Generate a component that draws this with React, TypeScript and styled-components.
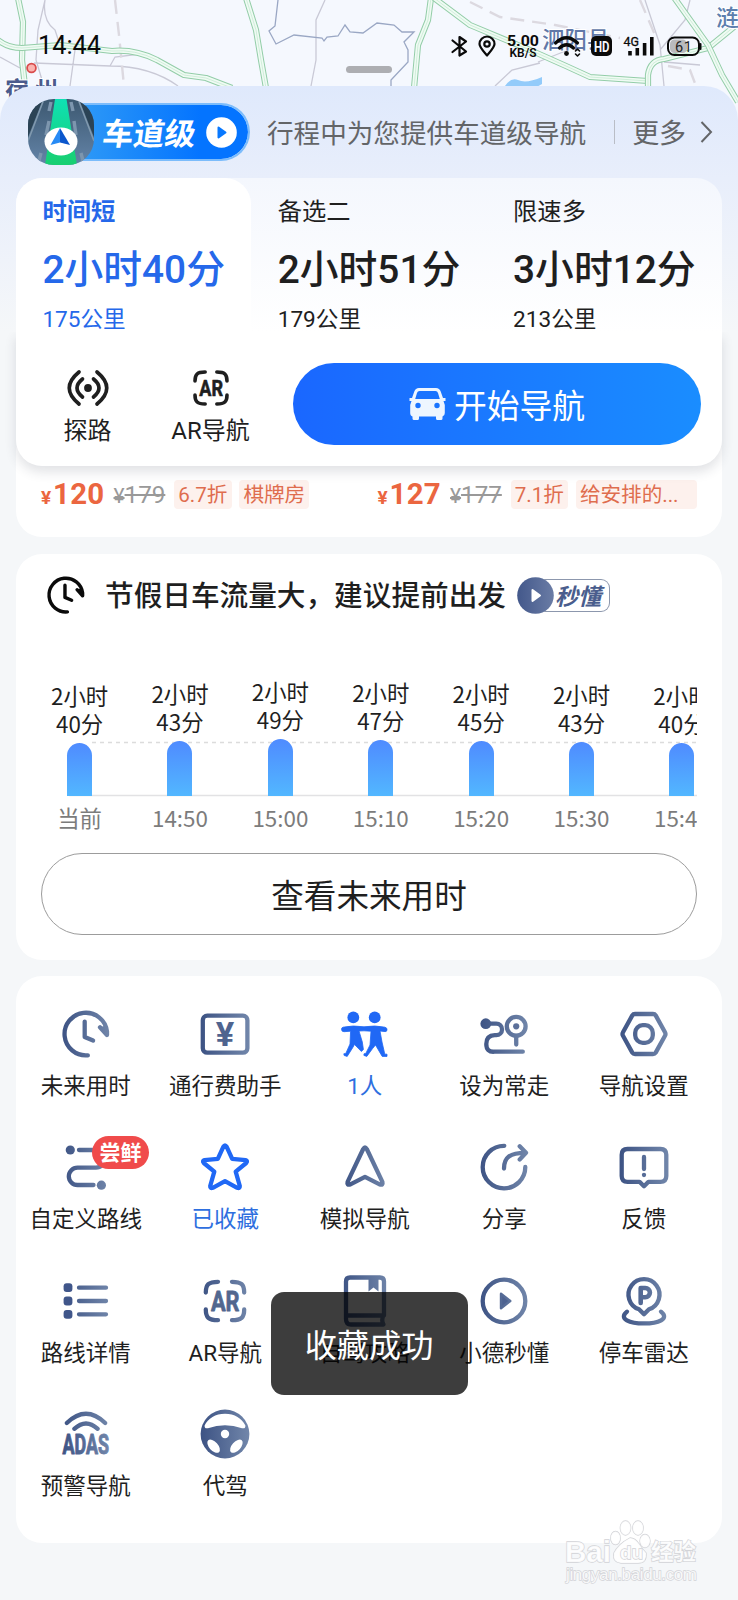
import React from "react";
import styled, { createGlobalStyle } from "styled-components";

const cjk = `"Noto Sans CJK SC", sans-serif`;
const mixed = `Roboto, "Noto Sans CJK SC", sans-serif`;
const navy = "url(#navy)";

const Global = createGlobalStyle`
  * { box-sizing: border-box; }
  body { margin: 0; background: #f5f7f9; font-family: ${mixed}; color: #1f1f1f; }
`;

const Screen = styled.main`
  position: relative;
  width: 738px;
  height: 1600px;
  overflow: hidden;
  background: #f5f7f9;
`;

const MapLayer = styled.svg`
  position: absolute;
  inset: 0 auto auto 0;
`;

const StatusBar = styled.header`
  position: relative;
  height: 86px;
  padding: 29px 35px 0 38px;
  display: flex;
  justify-content: space-between;
  align-items: flex-start;
`;

const Clock = styled.span`
  font: 400 25.3px/34px Roboto, sans-serif;
  color: #0a0a0a;
`;

const Handle = styled.i`
  position: absolute;
  left: 346px;
  top: 66px;
  width: 46px;
  height: 7px;
  border-radius: 4px;
  background: #adaeb2;
`;

const Sheet = styled.div`
  position: relative;
  padding: 0 16px;
  border-radius: 34px 34px 0 0;
  height: 1514px;
  background: linear-gradient(#dfe9fc 0, #e8eefb 92px, #f5f7f9 245px);
`;

const Banner = styled.div`
  height: 92px;
  padding-left: 12px;
  display: flex;
  align-items: center;
`;

const LanePill = styled.div`
  position: relative;
  display: flex;
  align-items: center;
  width: 222px;
  height: 66px;
`;

const LaneTag = styled.div`
  display: flex;
  align-items: center;
  width: 192px;
  height: 58px;
  margin-left: 30px;
  padding-left: 44.5px;
  border: 2.5px solid #7cbcfb;
  border-left: 0;
  border-radius: 0 30px 30px 0;
  background: linear-gradient(90deg, #35a0f5, #0474ff 75%);
  background-clip: padding-box;
`;

const LaneText = styled.b`
  font: 700 31px/50px ${cjk};
  color: #fff;
  transform: skewX(-8deg);
  margin-right: 10px;
`;

const LaneArt = styled.svg`
  position: absolute;
  left: 0;
  top: 0;
`;

const BannerText = styled.span`
  margin-left: 17px;
  font: 400 26.6px/40px ${cjk};
  color: #636568;
  white-space: nowrap;
`;

const Divider = styled.i`
  width: 1px;
  height: 24px;
  margin: 0 17px 0 28px;
  background: #b9bdc6;
`;

const More = styled.span`
  display: flex;
  align-items: center;
  gap: 14px;
  font: 400 27px/40px ${cjk};
  color: #636568;
`;

const RouteCard = styled.section`
  position: relative;
  z-index: 1;
  height: 288px;
  border-radius: 26px;
  background: linear-gradient(#f4f7fd 0, #ffffff 155px);
`;

const Tabs = styled.div`
  display: grid;
  grid-template-columns: repeat(3, 1fr);
  height: 154px;
`;

const RouteTab = styled.div<{ $active?: boolean }>`
  padding: 16px 0 0 26.4px;
  border-radius: 26px 26px 0 0;
  background: ${(p) => (p.$active ? "#fff" : "transparent")};
  color: ${(p) => (p.$active ? "#2568ea" : "#1f1f1f")};
  white-space: nowrap;
`;

const TabName = styled.div<{ $active?: boolean }>`
  font: ${(p) => (p.$active ? 700 : 400)} 24.3px/32px ${cjk};
`;

const TabTime = styled.div`
  margin-top: 21px;
  font: 500 38.8px/46px ${mixed};
`;

const TabDistance = styled.div`
  margin-top: 12px;
  font: 400 22.6px/30px ${mixed};
`;

const Actions = styled.div`
  display: flex;
  height: 134px;
  padding: 31px 21px 0 20px;
  border-radius: 0 0 26px 26px;
  background: #fff;
  box-shadow: 0 6px 12px rgba(40, 50, 70, 0.14);
  clip-path: inset(0 -20px -20px -20px);
`;

const Action = styled.div<{ $width: number }>`
  width: ${(p) => p.$width}px;
  display: flex;
  flex-direction: column;
  align-items: center;
  font: 400 24px/34px ${mixed};
  white-space: nowrap;
`;

const ActionIcon = styled.div`
  height: 49px;
  margin-bottom: 2px;
  display: flex;
  align-items: center;
`;

const StartButton = styled.button`
  margin-left: auto;
  width: 408px;
  height: 82px;
  border: 0;
  padding: 0 2px 0 2px;
  border-radius: 41px;
  background: linear-gradient(90deg, #1a67ff, #1a8dff);
  color: #fff;
  display: flex;
  align-items: center;
  justify-content: center;
  gap: 8px;
  font: 400 32.8px/48px ${cjk};
`;

const HotelCard = styled.section`
  height: 111px;
  margin-top: -40px;
  padding: 54px 25px 0;
  display: grid;
  grid-template-columns: 336.5px 1fr;
  border-radius: 26px;
  background: #fff;
`;

const Offer = styled.div`
  display: flex;
  align-items: center;
  height: 29px;
  font-family: ${mixed};
  white-space: nowrap;
`;

const Price = styled.b`
  width: 64px;
  font-size: 29.4px;
  letter-spacing: 0.3px;
  line-height: 29px;
  padding-top: 2px;
  color: #eb6640;
  small { font-size: 19px; margin-right: 1.5px; }
`;

const OldPrice = styled.s`
  width: 53px;
  margin-left: 8.5px;
  font-size: 24.2px;
  line-height: 29px;
  padding-top: 2px;
  color: #999;
  small { font-size: 21px; }
`;

const OfferTag = styled.span<{ $width: number }>`
  width: ${(p) => p.$width}px;
  height: 29px;
  margin-left: 7.7px;
  padding-left: 4px;
  border-radius: 4px;
  background: #fdf1ed;
  color: #df6d4e;
  font-size: 20.6px;
  line-height: 31px;
`;

const TimeCard = styled.section`
  height: 406px;
  margin-top: 17px;
  padding: 17px 25px 0;
  border-radius: 26px;
  background: #fff;
`;

const TimeHead = styled.div`
  height: 48px;
  display: flex;
  align-items: center;
  padding-left: 6px;
`;

const TimeTitle = styled.h2`
  margin: 0 11px 2px 20px;
  font: 500 28.65px/42px ${cjk};
  white-space: nowrap;
`;

const QuickBadge = styled.span`
  display: flex;
  align-items: center;
  width: 93px;
  height: 37px;
`;

const QuickText = styled.span`
  flex: 1;
  height: 33px;
  margin-left: -10px;
  padding-left: 11px;
  border: 1px solid #8c97ad;
  border-left: 0;
  border-radius: 0 9px 9px 0;
  font: italic 700 23px/31px ${cjk};
  color: #4a5d8d;
`;

const Chart = styled.div`
  position: relative;
  height: 211px;
  overflow: hidden;
`;

const ChartInner = styled.div`
  display: flex;
  align-items: flex-end;
  height: 211px;
  margin-left: -11.6px;
  position: relative;
`;

const GuideLines = styled.svg`
  position: absolute;
  left: 0;
  top: 120px;
`;

const ChartColumn = styled.div`
  flex: none;
  width: 100.4px;
  display: flex;
  flex-direction: column;
  align-items: center;
  text-align: center;
  font: 400 22.4px/28px ${cjk};
`;

const Bar = styled.i`
  width: 25px;
  margin-top: 6px;
  border-radius: 12.5px 12.5px 0 0;
  background: linear-gradient(#4f8bff, #52b7ff);
`;

const Hour = styled.span`
  height: 25px;
  margin-top: 9px;
  line-height: 25px;
  color: #7c7c7c;
`;

const FutureButton = styled.button`
  display: block;
  width: 656px;
  height: 82px;
  margin-top: 23px;
  padding: 0 0 1px;
  border: 1px solid #9c9c9c;
  border-radius: 41px;
  background: #fff;
  color: #1f1f1f;
  font: 400 32.6px/48px ${cjk};
`;

const ToolsCard = styled.section`
  height: 567px;
  margin-top: 16px;
  padding-top: 33px;
  display: grid;
  grid-template-columns: repeat(5, 139.5px);
  grid-template-rows: repeat(4, 133.3px);
  border-radius: 26px;
  background: #fff;
`;

const Tool = styled.div<{ $blue?: boolean }>`
  position: relative;
  display: flex;
  flex-direction: column;
  align-items: center;
  font: 400 22.5px/32px ${mixed};
  color: ${(p) => (p.$blue ? "#2e6fdf" : "#1f1f1f")};
  white-space: nowrap;
`;

const ToolIcon = styled.div`
  height: 50px;
  margin-bottom: 11px;
  display: flex;
  align-items: center;
`;

const NewBadge = styled.span`
  position: absolute;
  left: 76px;
  top: -6px;
  width: 57px;
  height: 33px;
  border-radius: 17px;
  background: #f04b4b;
  color: #fff;
  text-align: center;
  font: 700 21px/31px ${cjk};
`;

const Toast = styled.div`
  position: absolute;
  z-index: 2;
  left: 270.5px;
  top: 1292px;
  width: 197px;
  height: 103px;
  border-radius: 13px;
  background: rgba(0, 0, 0, 0.76);
  color: #fff;
  text-align: center;
  font: 400 32.2px/103px ${cjk};
`;

const Watermark = styled.svg`
  position: absolute;
  z-index: 2;
  left: 560px;
  top: 1515px;
`;

const Icon = ({ size = 48, color = navy, children }: { size?: number; color?: string; children: React.ReactNode }) => (
  <svg width={size} height={size} viewBox="0 0 48 48" overflow="visible" fill="none" stroke={color} strokeWidth="4.3" strokeLinecap="round" strokeLinejoin="round">
    {children}
  </svg>
);

const clockShape = (
  <>
    <path d="M25.8 45.3A21.3 21.3 0 1 1 45 21.5V25L38 17.3M41 18.500L43.500 21" />
    <path d="M22.7 11.6V27l8.4 3.6" />
  </>
);

const arShape = (color: string) => (
  <>
    <path d="M4.8 15.5C4.8 7.5 7.5 4.8 17 4.8M31 4.8C40.5 4.8 43.2 7.5 43.2 15.5M43.2 32.5C43.2 40.5 40.5 43.2 31 43.2M17 43.2C7.5 43.2 4.8 40.5 4.8 32.5" />
    <text x="10" y="34" fontFamily="Roboto" fontWeight="700" fontSize="27.5" textLength="28.5" lengthAdjust="spacingAndGlyphs" fill={color} stroke={color} strokeWidth=".8">AR</text>
  </>
);

const PeopleIcon = () => (
  <svg width="48" height="48" viewBox="0 0 48 48" overflow="visible" fill="#2068f5">
    <circle cx="12.3" cy="7.4" r="5.9" />
    <circle cx="33.7" cy="7.4" r="5.9" />
    <path
      stroke="#2068f5"
      strokeWidth=".8"
      strokeLinejoin="round"
      d="M2 17.2Q12 15 23 16.8Q34 15 44 17.2Q46.600 18 46 20.500Q45.400 22 43 21.500L39 21L41 32L43.800 44.200H46V46.400H41.200L34.500 35L31.600 38.500L25.800 46.400L22.900 45.400L23 43.800L24.800 43.400L29 35L30 21.200L23 20.800L18 21L21.300 32L22.400 39.500L20.400 41.500L13.500 34.500L11.500 38L6.200 46.400L3.200 45.500L2.800 43.800L4.800 43.400L9 34L9.600 21.200L3 21.700Q.6 21.700 .5 19.400Q.5 17.600 2 17.200Z"
    />
  </svg>
);

const tools: { label: string; blue?: boolean; badge?: string; icon: React.ReactNode }[] = [
  { label: "未来用时", icon: <Icon>{clockShape}</Icon> },
  {
    label: "通行费助手",
    icon: (
      <Icon>
        <rect x="1.8" y="5.7" width="44.6" height="37" rx="4.5" />
        <text x="24" y="36" textAnchor="middle" fontFamily="Roboto" fontWeight="700" fontSize="34" textLength="18.5" lengthAdjust="spacingAndGlyphs" fill="#4f648f" stroke="none">¥</text>
      </Icon>
    ),
  },
  { label: "1人", blue: true, icon: <PeopleIcon /> },
  {
    label: "设为常走",
    icon: (
      <Icon>
        <circle cx="5.8" cy="13.7" r="5.4" fill={navy} stroke="none" />
        <path d="M6 13.7H16.3A5.7 5.7 0 0 1 16.3 25.2H14.8Q6.3 25.5 6.3 34T14.5 41.7H42.8" />
        <circle cx="36.2" cy="16.3" r="9.4" />
        <circle cx="36.2" cy="16.3" r="3.1" fill="#5c7099" stroke="none" />
        <path d="M36.2 26L36.25 34.6" />
      </Icon>
    ),
  },
  {
    label: "导航设置",
    icon: (
      <Icon>
        <path d="M3 22.2L12.3 5.4Q13.2 4 15 4H33Q34.8 4 35.7 5.4L45 22.2Q46 24 45 25.8L35.7 42.6Q34.8 44 33 44H15Q13.2 44 12.3 42.6L3 25.8Q2 24 3 22.2Z" />
        <rect x="15.2" y="15.2" width="17.6" height="17.6" rx="7.5" />
      </Icon>
    ),
  },
  {
    label: "自定义路线",
    badge: "尝鲜",
    icon: (
      <Icon>
        <circle cx="8.3" cy="7" r="4.6" fill={navy} stroke="none" />
        <path d="M17 7.01H34a8.8 8.8 0 0 1 0 17.6H15.5a8.7 8.7 0 0 0 0 17.4H31.5" />
        <circle cx="39.4" cy="42.2" r="4.6" fill={navy} stroke="none" />
      </Icon>
    ),
  },
  {
    label: "已收藏",
    blue: true,
    icon: (
      <Icon color="#2068f5">
        <path d="M22.3 3.8Q24 .8 25.7 3.8L31.2 15.8L44.6 17.2Q47 17.8 45.2 20L34.7 28.6L38.8 43Q39 45.8 36.2 44.8L24 38.2L11.8 44.8Q9 45.8 9.2 43L13.3 28.6L2.8 20Q1 17.8 3.4 17.2L16.8 15.8Z" />
      </Icon>
    ),
  },
  {
    label: "模拟导航",
    icon: (
      <Icon>
        <path d="M22.2 6Q24 3 25.8 6L41.4 38.8Q42.4 42.6 38.6 41.4L24 33.8L9.4 41.4Q5.6 42.6 6.6 38.8Z" />
      </Icon>
    ),
  },
  {
    label: "分享",
    icon: (
      <Icon>
        <path d="M24.3 2.8A21.3 21.3 0 1 0 45.3 24M24 25.5C24 14.5 30 9.8 45 9.8M39.7 3.2L46 9.8L39.7 16.4" />
      </Icon>
    ),
  },
  {
    label: "反馈",
    icon: (
      <Icon>
        <path d="M7.5 6H40.5Q46.3 6 46.3 11.8V33Q46.3 38.8 40.5 38.8H28.5L24 43.3L19.5 38.8H7.5Q1.7 38.8 1.7 33V11.8Q1.7 6 7.5 6ZM24 14V26M24 31.8V32" />
      </Icon>
    ),
  },
  {
    label: "路线详情",
    icon: (
      <Icon>
        {[10.7, 24, 37.3].map((y) => (
          <g key={y}>
            <rect x="1.6" y={y - 4.4} width="8.8" height="8.8" rx="3" fill="#40568a" stroke="none" />
            <path d={`M17 ${y}L44 ${y + 0.01}`} />
          </g>
        ))}
      </Icon>
    ),
  },
  { label: "AR导航", icon: <Icon>{arShape("#52678f")}</Icon> },
  {
    label: "自驾攻略",
    icon: (
      <Icon>
        <path d="M43 38.5V4.5Q43 .5 39 .5H9Q5 .5 5 4.5V42Q5 47.5 10 47.5H42.5Q40 43 42.5 38.5H6" />
        <path d="M27.5 0H37.5V14.5L32.5 10.5L27.5 14.5Z" fill={navy} stroke="none" />
      </Icon>
    ),
  },
  {
    label: "小德秒懂",
    icon: (
      <Icon>
        <circle cx="24" cy="24" r="21.3" />
        <path d="M21 16.8L30.3 24L21 31.2Z" fill="#4d6290" strokeWidth="2.4" />
      </Icon>
    ),
  },
  {
    label: "停车雷达",
    icon: (
      <Icon>
        <path d="M19 32.3A15.5 15.5 0 1 1 29 32.3L24 37.3Z" />
        <path d="M20.7 26V11H25.3A4.3 4.3 0 0 1 25.3 20.2H21" strokeWidth="4.6" />
        <path d="M7 34.7C-2 42 10 46.4 24 46.4S50 42 41 34.7" />
      </Icon>
    ),
  },
  {
    label: "预警导航",
    icon: (
      <Icon>
        <path d="M4.8 13Q24-5.5 43.2 13M12.3 18.8Q24 8 35.7 18.8" />
        <text x=".5" y="44" fontFamily="Roboto" fontWeight="700" fontSize="28" textLength="46.5" lengthAdjust="spacingAndGlyphs" fill={navy} strokeWidth="1">ADAS</text>
      </Icon>
    ),
  },
  {
    label: "代驾",
    icon: (
      <Icon>
        <circle cx="24" cy="24" r="24.4" fill={navy} stroke="none" />
        <g fill="#fff" stroke="none">
          <path d="M3.6 15.5C7 8.3 14.5 3.7 24 3.7S41 8.3 44.4 15.5Q44.6 19 41 18.2Q24 12.2 7 18.2Q3.4 19 3.6 15.5Z" />
          <circle cx="24" cy="24" r="4.2" />
          <ellipse cx="12.6" cy="36.2" rx="8" ry="4.4" transform="rotate(48 12.6 36.2)" />
          <ellipse cx="35.4" cy="36.2" rx="8" ry="4.4" transform="rotate(-48 35.4 36.2)" />
        </g>
      </Icon>
    ),
  },
];

const columns = [
  { minutes: 40, time: "当前", height: 53.5 },
  { minutes: 43, time: "14:50", height: 54.7 },
  { minutes: 49, time: "15:00", height: 57 },
  { minutes: 47, time: "15:10", height: 56 },
  { minutes: 45, time: "15:20", height: 55.3 },
  { minutes: 43, time: "15:30", height: 54.5 },
  { minutes: 40, time: "15:40", height: 53.5 },
];

const routes = [
  { name: "时间短", time: "2小时40分", distance: "175公里" },
  { name: "备选二", time: "2小时51分", distance: "179公里" },
  { name: "限速多", time: "3小时12分", distance: "213公里" },
];

const highways = [
  "M18-2L23 22L22 60L25 86",
  "M-2 40Q8 48 22 48L60 45L112 51Q135 49 157 60L184 75L206 78L232 88",
  "M246-2L256 30L261 60L266 88",
  "M431-2L428 20L418 45L414 88",
  "M434-2L470 25L530 50L566 66L590 77L648 81",
  "M648 88V75Q650 60 664 59L708 48L735 26",
  "M673-4L708 45L722 75L738 102",
];

const MapView = () => (
  <MapLayer width="738" height="122" fill="none">
    <defs>
      <linearGradient id="navy" gradientUnits="userSpaceOnUse" x1="0" y1="0" x2="48" y2="0">
        <stop stopColor="#3d5384" />
        <stop offset="1" stopColor="#7186aa" />
      </linearGradient>
    </defs>
    <rect width="738" height="122" fill="#f5f8fe" />
    <path d="M45 0L38 30L36 60L42 80M45 0Q42 20 55 30L60 45M0 57L20 68M34 63L110 66Q150 66 178 86M110 66L115 57L140 54M75 50L70 86M325 0L316 20V60L311 86M645 0L660 45L664 86M495 86L512 70L540 63M690 0L685 20L660 50M664 62L700 65M538 62L568 50" stroke="#c9c9d6" strokeWidth="1.3" />
    <path d="M115 0L119 35L124 86M470 2L500 17L555 25L620 38M640 0L655 35M668 66L690 70L696 86" stroke="#dcd9e0" strokeWidth="2.4" strokeDasharray="14 8" />
    <path d="M278 0L275 26L269 31L276 44L294 35L322 38L324 41L327 37L338 36L345 25L350 32L363 33L377 23L394 25L402 32L414 32L404 42L408 50V62L391 80V86" stroke="#9aa7c4" strokeWidth="1.3" />
    <path d="M505 86Q511 77 518 80Q526 84 542 77V84L535 88Z" fill="#93cbfa" />
    {highways.map((d) => (
      <g key={d} strokeLinejoin="round">
        <path d={d} stroke="#93cda8" strokeWidth="6.2" />
        <path d={d} stroke="#f0fbf4" strokeWidth="4.2" />
        <path d={d} stroke="#c2e8cf" strokeWidth=".7" />
      </g>
    ))}
    <circle cx="31.5" cy="68" r="4.4" fill="#fbb4b0" stroke="#d94c4c" strokeWidth="1.8" />
    <g fontFamily="Noto Sans CJK SC" fill="#4b5b8c" stroke="#fff" strokeWidth="2" paintOrder="stroke">
      <text x="5" y="99" fontSize="24" fontWeight="700" letterSpacing="5">宿州</text>
      <text x="542" y="48" fontSize="22.5" fontWeight="500" fill="#6178a8">泗阳县</text>
      <text x="716" y="26" fontSize="23" fontWeight="500" fill="#5d7fae">涟</text>
    </g>
  </MapLayer>
);

const StatusIcons = () => (
  <svg width="255" height="34" viewBox="448 28 255 34" fill="none" stroke="#0a0a0a" strokeWidth="2.2" strokeLinecap="round" strokeLinejoin="round">
    <path d="M452.5 39.5L466 50.5L459.5 54.5V36L466 40.5L452.5 51" />
    <path d="M487 54.5C482 48.5 479.5 46 479.5 43A7.5 7.5 0 0 1 494.5 43C494.5 46 492 48.5 487 54.5Z" />
    <circle cx="487" cy="43" r="2.7" />
    <g fill="#0a0a0a" stroke="none" fontFamily="Roboto" fontWeight="700">
      <text x="507" y="44.5" fontSize="15.5" textLength="32" lengthAdjust="spacingAndGlyphs">5.00</text>
      <text x="509.5" y="56" fontSize="12.5" fontWeight="600" textLength="27" lengthAdjust="spacingAndGlyphs">KB/S</text>
      <rect x="591" y="35" width="21" height="20" rx="5" />
      <text x="594" y="50.5" fontSize="15" fill="#f5f8fe" textLength="15.5" lengthAdjust="spacingAndGlyphs">HD</text>
      <text x="623.5" y="44.5" fontSize="12.5" fontWeight="400" stroke="#0a0a0a" strokeWidth=".3" textLength="15.5" lengthAdjust="spacingAndGlyphs">4G</text>
      <circle cx="566.5" cy="52.5" r="2.4" />
    </g>
    <path d="M555.5 42Q566.5 31.5 577.5 42M559.5 47Q566.5 40.5 573.5 47" strokeWidth="3.2" />
    <path d="M575.5 50L577.5 48L579.5 50M575.5 53L577.5 55L579.5 53" strokeWidth="1.6" />
    <path d="M630 50V54.5M637.3 47V54.5M644.6 42V54.5M651.8 36V54.5" strokeWidth="3.6" strokeLinecap="butt" />
    <rect x="668" y="36.5" width="31" height="17.5" rx="6.5" strokeWidth="2" />
    <rect x="670" y="38.5" width="17" height="13.5" rx="4.5" fill="#b9babd" stroke="none" />
    <path d="M700.5 43V48" strokeWidth="2" />
    <text x="675" y="50.5" fontFamily="Roboto" fontSize="14.5" letterSpacing=".5" fill="#222" stroke="none">61</text>
  </svg>
);

const LaneIllustration = () => (
  <LaneArt width="66" height="66" viewBox="0 0 66 66">
    <defs>
      <clipPath id="lane"><rect width="66" height="66" rx="26" /></clipPath>
      <linearGradient id="road" x2="0" y2="1"><stop stopColor="#3c5870" /><stop offset="1" stopColor="#6484a8" /></linearGradient>
      <linearGradient id="green" x2="0" y2="1"><stop stopColor="#0fe0b4" /><stop offset="1" stopColor="#18cf70" /></linearGradient>
    </defs>
    <g clipPath="url(#lane)">
      <rect width="66" height="66" fill="url(#road)" />
      <path d="M0 0H15L0 38ZM66 0H51L66 38Z" fill="#2b4355" />
      <path d="M16 0L0 42M50 0L66 42" stroke="#8099ae" strokeWidth="1.6" />
      <path d="M23 3L21 12M21 22L18 36M13 54L10 66M43 3L45 12M46 22L48 36M53 54L56 66" stroke="#7d96ae" strokeWidth="3.4" />
      <path d="M27 0H38.5L49 66H17Z" fill="url(#green)" />
      <ellipse cx="33" cy="42.5" rx="16.5" ry="14" fill="#fff" />
      <path d="M32 29L22.5 46L32 43.5Z" fill="#278bf5" />
      <path d="M32 29L42 46L32 43.5Z" fill="#0b56cc" />
    </g>
  </LaneArt>
);

export default function App() {
  return (
    <Screen>
      <Global />
      <MapView />
      <StatusBar>
        <Clock>14:44</Clock>
        <StatusIcons />
        <Handle />
      </StatusBar>
      <Sheet>
        <Banner>
          <LanePill>
            <LaneTag>
              <LaneText>车道级</LaneText>
              <svg width="31" height="31" viewBox="0 0 31 31">
                <circle cx="15.5" cy="15.5" r="15.3" fill="#fff" />
                <path d="M12.5 10.5L19.5 15.5L12.5 20.5Z" fill="#0878ff" stroke="#0878ff" strokeWidth="2" strokeLinejoin="round" />
              </svg>
            </LaneTag>
            <LaneIllustration />
          </LanePill>
          <BannerText>行程中为您提供车道级导航</BannerText>
          <Divider />
          <More>
            更多
            <svg width="13" height="24" viewBox="0 0 13 24" fill="none" stroke="#636568" strokeWidth="2">
              <path d="M1.5 2L11 12L1.5 22" />
            </svg>
          </More>
        </Banner>

        <RouteCard>
          <Tabs>
            {routes.map((route, i) => (
              <RouteTab key={route.name} $active={i === 0}>
                <TabName $active={i === 0}>{route.name}</TabName>
                <TabTime>{route.time}</TabTime>
                <TabDistance>{route.distance}</TabDistance>
              </RouteTab>
            ))}
          </Tabs>
          <Actions>
            <Action $width={103}>
              <ActionIcon>
                <svg width="44" height="38" viewBox="-22 -19 44 38" fill="none" stroke="#1f1f1f" strokeWidth="3.7" strokeLinecap="round">
                  <circle r="3.9" fill="#1f1f1f" stroke="none" />
                  <path d="M-9-16Q-28.5 0-9 16M9-16Q28.5 0 9 16M-5.5-9Q-16.5 0-5.5 9M5.5-9Q16.5 0 5.5 9" />
                </svg>
              </ActionIcon>
              探路
            </Action>
            <Action $width={143}>
              <ActionIcon><Icon size={40} color="#1f1f1f">{arShape("#1f1f1f")}</Icon></ActionIcon>
              AR导航
            </Action>
            <StartButton>
              <svg width="37" height="33" viewBox="0 0 37 33" fill="#eef6ff">
                <path fillRule="evenodd" d="M10 0H27Q30.5 0 31.7 3.5L34 10H36.5V13H34.5L35.8 17V25Q35.8 28 33.5 28.4V30.5Q33.5 32 32 32H28.5Q27 32 27 30.5V28.5H10V30.5Q10 32 8.5 32H5Q3.5 32 3.5 30.5V28.4Q1.2 28 1.2 25V17L2.5 13H.5V10H3L5.3 3.5Q6.5 0 10 0ZM10.5 3Q8.6 3 8 5L6.2 11H30.8L29 5Q28.4 3 26.5 3ZM9 14.8A2.7 2.7 0 1 0 9 20.2A2.7 2.7 0 1 0 9 14.8ZM28 14.8A2.7 2.7 0 1 0 28 20.2A2.7 2.7 0 1 0 28 14.8Z" />
              </svg>
              开始导航
            </StartButton>
          </Actions>
        </RouteCard>

        <HotelCard>
          <Offer>
            <Price><small>¥</small>120</Price>
            <OldPrice><small>¥</small>179</OldPrice>
            <OfferTag $width={57.5}>6.7折</OfferTag>
            <OfferTag $width={70}>棋牌房</OfferTag>
          </Offer>
          <Offer>
            <Price><small>¥</small>127</Price>
            <OldPrice><small>¥</small>177</OldPrice>
            <OfferTag $width={57.5}>7.1折</OfferTag>
            <OfferTag $width={121}>给安排的...</OfferTag>
          </Offer>
        </HotelCard>

        <TimeCard>
          <TimeHead>
            <Icon size={38} color="#0a0a0a">{clockShape}</Icon>
            <TimeTitle>节假日车流量大，建议提前出发</TimeTitle>
            <QuickBadge>
              <svg width="37" height="37" viewBox="0 0 37 37">
                <defs><linearGradient id="quick"><stop stopColor="#43588b" /><stop offset="1" stopColor="#6a7ca5" /></linearGradient></defs>
                <circle cx="18.5" cy="18.5" r="18.3" fill="url(#quick)" />
                <path d="M15.5 13L23 18.5L15.5 24Z" fill="#fff" stroke="#fff" strokeWidth="2" strokeLinejoin="round" />
              </svg>
              <QuickText>秒懂</QuickText>
            </QuickBadge>
          </TimeHead>
          <Chart>
            <GuideLines width="656" height="60" fill="none">
              <path d="M51 3.5H656" stroke="#dcdcdc" strokeWidth="1.5" strokeDasharray="4 4" />
              <path d="M28 56.5H656" stroke="#e2e2e4" strokeWidth="1.5" />
            </GuideLines>
            <ChartInner>
              {columns.map((c) => (
                <ChartColumn key={c.time}>
                  <span>2小时</span>
                  <span>{c.minutes}分</span>
                  <Bar style={{ height: c.height }} />
                  <Hour>{c.time}</Hour>
                </ChartColumn>
              ))}
            </ChartInner>
          </Chart>
          <FutureButton>查看未来用时</FutureButton>
        </TimeCard>

        <ToolsCard>
          {tools.map((tool) => (
            <Tool key={tool.label} $blue={tool.blue}>
              <ToolIcon>{tool.icon}</ToolIcon>
              {tool.label}
              {tool.badge && <NewBadge>{tool.badge}</NewBadge>}
            </Tool>
          ))}
        </ToolsCard>
      </Sheet>

      <Toast>收藏成功</Toast>

      <Watermark width="142" height="76" fill="#fff" fillOpacity=".85" stroke="#d2d3d7" strokeWidth="1.3">
        <g paintOrder="stroke">
          <text x="5" y="47" fontFamily="Liberation Sans" fontWeight="700" fontSize="30" textLength="46" lengthAdjust="spacingAndGlyphs">Bai</text>
          <ellipse cx="55.5" cy="23" rx="4.8" ry="6.5" />
          <ellipse cx="65.5" cy="13" rx="5.2" ry="7" />
          <ellipse cx="78" cy="13" rx="5.2" ry="7" />
          <ellipse cx="85" cy="26" rx="5" ry="6.5" />
          <path d="M70 23Q75 23 79 29T86 38Q87 48 78 48H61Q52 47 54 38Q56 34 60 30T70 23Z" />
          <text x="60" y="44" fontFamily="Liberation Sans" fontWeight="700" fontSize="19">du</text>
          <text x="91" y="45" fontFamily="Noto Sans CJK SC" fontWeight="700" fontSize="22.5">经验</text>
          <text x="6" y="65" fontFamily="Liberation Sans" fontSize="17" textLength="131">jingyan.baidu.com</text>
        </g>
      </Watermark>
    </Screen>
  );
}
